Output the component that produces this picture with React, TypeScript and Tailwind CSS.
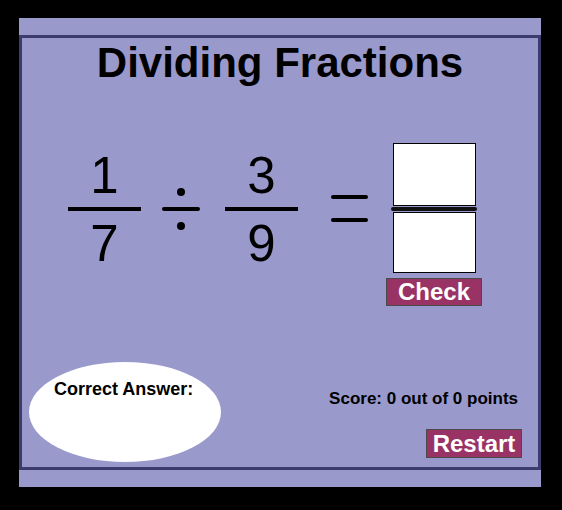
const FONT = { fontFamily: '"Liberation Sans", Arial, sans-serif' };

function Fraction({ top, bottom }: { top: string; bottom: string }) {
  return (
    <div className="mt-[7px] flex w-[73px] flex-col items-center">
      <div className="h-[51px] text-[51px] leading-[51px] text-black">{top}</div>
      <div className="mt-[6px] h-[4px] w-full bg-black" />
      <div className="mt-[7px] h-[51px] text-[51px] leading-[51px] text-black">{bottom}</div>
    </div>
  );
}

function DivideSign() {
  return (
    <div className="mt-[45px] flex w-[38px] flex-col items-center">
      <div className="h-[8px] w-[8px] rounded-full bg-black" />
      <div className="mt-[11px] h-[4px] w-full rounded-full bg-black" />
      <div className="mt-[11px] h-[8px] w-[8px] rounded-full bg-black" />
    </div>
  );
}

function EqualsSign() {
  return (
    <div className="mt-[52px] flex w-[37px] flex-col">
      <div className="h-[4px] w-full rounded-full bg-black" />
      <div className="mt-[19px] h-[4px] w-full rounded-full bg-black" />
    </div>
  );
}

export default function App() {
  return (
    <div className="h-[510px] w-[562px] bg-black pl-[19px] pt-[18px]" style={FONT}>
      <div className="h-[469px] w-[522px] bg-[#9999cc] py-[17px]">
        <div className="flex h-[435px] flex-col border-[3px] border-[#3b3b6e]">
          {/* Title */}
          <h1 className="mt-[4px] text-center text-[42px] font-bold leading-[42px] text-black">
            Dividing Fractions
          </h1>

          {/* Problem */}
          <div className="mt-[59px] flex items-start pl-[46px]">
            <Fraction top="1" bottom="7" />
            <div className="ml-[21px]">
              <DivideSign />
            </div>
            <div className="ml-[25px]">
              <Fraction top="3" bottom="9" />
            </div>
            <div className="ml-[33px]">
              <EqualsSign />
            </div>
            <div className="ml-[18px] flex w-[96px] flex-col items-center">
              <input
                className="h-[63px] w-[83px] border border-black bg-white text-center text-[40px] outline-none"
                aria-label="numerator"
              />
              <div className="mt-[1px] h-[4px] w-[86px] rounded-full bg-[#111]" />
              <input
                className="mt-[1px] h-[61px] w-[83px] border border-black bg-white text-center text-[40px] outline-none"
                aria-label="denominator"
              />
              <button className="mt-[5px] h-[28px] w-[96px] border border-[#4a4a4a] bg-[#993366] text-[24px] font-bold leading-[24px] text-white">
                Check
              </button>
            </div>
          </div>

          {/* Bottom */}
          <div className="mt-[56px] flex items-start justify-between pl-[7px] pr-[16px]">
            <div className="h-[100px] w-[192px] rounded-[50%] bg-white pl-[25px] pt-[18px]">
              <p className="text-[18px] font-bold leading-[18px] text-black">Correct Answer:</p>
            </div>
            <div className="flex flex-col items-end">
              <p className="mr-[4px] mt-[28px] text-[17px] font-bold leading-[17px] text-black">
                Score: 0 out of 0 points
              </p>
              <button className="mt-[22px] h-[29px] w-[96px] border border-[#4a4a4a] bg-[#993366] text-[24px] font-bold leading-[24px] text-white">
                Restart
              </button>
            </div>
          </div>
        </div>
      </div>
    </div>
  );
}
